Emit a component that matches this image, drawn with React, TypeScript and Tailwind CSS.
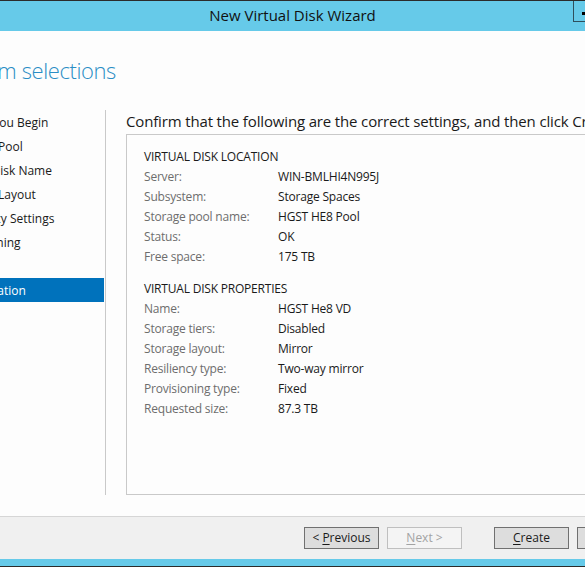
import React from "react";

const font = { fontFamily: '"Open Sans", "Noto Sans", "Liberation Sans", sans-serif' };

const navItems = [
  "Before You Begin",
  "Storage Pool",
  "Virtual Disk Name",
  "Storage Layout",
  "Resiliency Settings",
  "Provisioning",
  "Size",
  "Confirmation",
  "Results",
];

const location: [string, string][] = [
  ["Server:", "WIN-BMLHI4N995J"],
  ["Subsystem:", "Storage Spaces"],
  ["Storage pool name:", "HGST HE8 Pool"],
  ["Status:", "OK"],
  ["Free space:", "175 TB"],
];

const properties: [string, string][] = [
  ["Name:", "HGST He8 VD"],
  ["Storage tiers:", "Disabled"],
  ["Storage layout:", "Mirror"],
  ["Resiliency type:", "Two-way mirror"],
  ["Provisioning type:", "Fixed"],
  ["Requested size:", "87.3 TB"],
];

function Rows({ rows }: { rows: [string, string][] }) {
  return (
    <div className="flex flex-col">
      {rows.map(([k, v]) => (
        <div key={k} className="flex h-[20px] items-center text-[12px] tracking-[-0.2px] whitespace-nowrap">
          <div className="w-[134px] shrink-0 text-[#6d6d6d]">{k}</div>
          <div className="text-[#1a1a1a]">{v}</div>
        </div>
      ))}
    </div>
  );
}

function Btn({ children, disabled, className = "" }: { children: React.ReactNode; disabled?: boolean; className?: string }) {
  return (
    <div
      className={
        "shrink-0 w-[75px] h-[22px] flex items-center justify-center text-[12px] border " +
        (disabled
          ? "border-[#bfbfbf] bg-[#f4f4f4] text-[#a3a3a3] "
          : "border-[#707070] bg-[#dddddd] text-[#1a1a1a] ") +
        className
      }
    >
      {children}
    </div>
  );
}

export default function App() {
  return (
    <div className="w-[585px] h-[567px] overflow-hidden flex flex-col bg-[#fdfdfd]" style={font}>
      {/* Title bar */}
      <div className="relative h-[31px] shrink-0 bg-[#66cae9] border-t border-[#2b2b2b] flex items-center justify-center">
        <span className="text-[15px] text-[#111] -mt-[1px]">New Virtual Disk Wizard</span>
        <div className="absolute left-[573px] top-0 w-[24px] h-[21px] border border-[#2f4f5c] border-t-0">
          <div className="absolute left-[8px] top-[11px] w-[3px] h-[3px] bg-black" />
        </div>
      </div>

      {/* Body */}
      <div className="flex-1 flex flex-col overflow-hidden">
        <div className="h-[79px] shrink-0 flex items-center">
          <div className="-ml-[60px] text-[22px] font-light tracking-[-0.4px] text-[#2a8dc5] whitespace-nowrap">
            Confirm selections
          </div>
        </div>
        <div className="flex flex-1 pb-[21px]">
          {/* Nav */}
          <div className="w-[105px] shrink-0 overflow-hidden">
            <div className="-ml-[49px] w-[153px] flex flex-col">
              {navItems.map((n) => (
                <div
                  key={n}
                  className={
                    "h-[24px] flex items-center pl-[1px] pt-[1px] text-[12px] whitespace-nowrap " +
                    (n === "Confirmation" ? "bg-[#0072bc] text-white" : "text-[#1a1a1a]")
                  }
                >
                  {n}
                </div>
              ))}
            </div>
          </div>
          <div className="w-px shrink-0 bg-[#c9c9c9]" />
          {/* Main */}
          <div className="flex-1 pl-[20px] flex flex-col min-w-0">
            <div className="h-[26px] -mt-[2px] flex items-center text-[15px] tracking-[-0.15px] text-[#1a1a1a] whitespace-nowrap">
              Confirm that the following are the correct settings, and then click Create.
            </div>
            <div className="flex-1 border border-[#c9c9c9] border-r-0 bg-[#fdfdfd] pt-[12px] pl-[17px] mr-[-20px]">
              <div className="h-[20px] flex items-center text-[12px] tracking-[-0.2px] text-[#1a1a1a]">VIRTUAL DISK LOCATION</div>
              <Rows rows={location} />
              <div className="h-[20px] mt-[12px] flex items-center text-[12px] tracking-[-0.2px] text-[#1a1a1a]">VIRTUAL DISK PROPERTIES</div>
              <Rows rows={properties} />
            </div>
          </div>
        </div>
      </div>

      {/* Footer */}
      <div className="h-[43px] shrink-0 border-t border-[#d6d6d6] bg-[#f0f0f0] flex items-start pt-[10px]">
        <div className="ml-[304px] flex gap-[8px]">
          <Btn>
            &lt;&nbsp;<span className="underline underline-offset-2">P</span>revious
          </Btn>
          <Btn disabled>
            <span className="underline underline-offset-2">N</span>ext &gt;
          </Btn>
          <Btn className="ml-[24px]">
            <span className="underline underline-offset-2">C</span>reate
          </Btn>
          <Btn>Cancel</Btn>
        </div>
      </div>
      <div className="h-[7px] shrink-0 bg-[#66cae9]" />
      <div className="h-[1px] shrink-0 bg-[#2b2b2b]" />
    </div>
  );
}
